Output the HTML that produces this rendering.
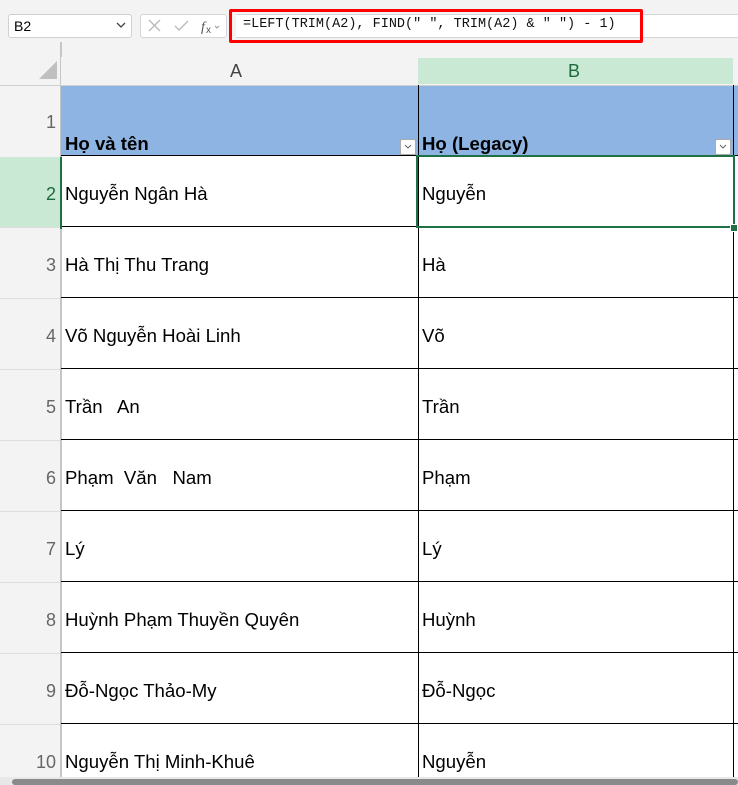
<!DOCTYPE html>
<html><head><meta charset="utf-8"><style>
body{margin:0;width:738px;height:785px;overflow:hidden;background:#fff;font-family:"Liberation Sans",sans-serif;position:relative}
.a{position:absolute}
.cell{position:absolute;font-size:18.6px;color:#000;white-space:pre;line-height:20px}
.rn{position:absolute;left:0;width:56px;text-align:right;font-size:18px;color:#666;line-height:20px}
.hl{position:absolute;height:1px;background:#000;left:61px;width:677px}
.dd{position:absolute;top:139px;width:14px;height:14px;background:#fff;border:1px solid #aaa;border-radius:2px}
</style></head><body>
<div class="a" style="left:0;top:0;width:738px;height:57px;background:#f3f3f3"></div>
<div class="a" style="left:8px;top:14px;width:122px;height:22px;border:1px solid #d0d0d0;background:#fff;border-radius:3px;font-size:14px;line-height:22px;text-indent:5px">B2</div>
<svg class="a" style="left:115px;top:20px" width="12" height="10"><path d="M2 3l4 4 4-4" stroke="#444" fill="none" stroke-width="1.3"/></svg>
<div class="a" style="left:140px;top:14px;width:85px;height:22px;border:1px solid #d6d6d6;background:#fff;border-radius:3px"></div>
<svg class="a" style="left:146px;top:18px" width="80" height="16"><path d="M3 2l11 11M14 2L3 13" stroke="#bbb" stroke-width="1.4"/><path d="M29 8l4 4 9-9" stroke="#bbb" stroke-width="1.4" fill="none"/><text x="55" y="13" font-size="14" font-style="italic" font-family="Liberation Serif" fill="#555">f</text><text x="60" y="15" font-size="10" font-family="Liberation Sans" fill="#555">x</text><path d="M69 8l2 2 2-2" stroke="#999" fill="none"/></svg>
<div class="a" style="left:236px;top:14px;width:502px;height:22px;background:#fff;border-top:1px solid #d6d6d6;border-bottom:1px solid #d6d6d6"></div>
<div class="a" style="left:243px;top:16px;font-family:'Liberation Mono',monospace;font-size:13.5px;line-height:18px;color:#111;white-space:pre">=LEFT(TRIM(A2), FIND(" ", TRIM(A2) &amp; " ") - 1)</div>
<div class="a" style="left:229px;top:9px;width:408px;height:28px;border:3px solid #f00;border-radius:2px"></div>
<div class="a" style="left:0;top:57px;width:61px;height:728px;background:#f3f3f3"></div>
<div class="a" style="left:60px;top:42px;width:2px;height:735px;background:#c6c6c6"></div>
<svg class="a" style="left:38px;top:60px" width="20" height="20"><path d="M19 1V19H1Z" fill="#c0c0c0"/></svg>
<div class="a" style="left:61px;top:57px;width:677px;height:28px;background:#f3f3f3"></div>
<div class="a" style="left:418px;top:58px;width:315px;height:26px;background:#c9e9d5"></div>
<div class="a" style="left:0;top:85px;width:738px;height:1px;background:#d0d0d0"></div>
<div class="a" style="left:230px;top:61px;font-size:18px;color:#444">A</div>
<div class="a" style="left:568px;top:61px;font-size:18px;color:#1d6b3c">B</div>
<div class="a" style="left:0;top:157px;width:60px;height:70px;background:#c9e9d5"></div>
<div class="a" style="left:61px;top:86px;width:677px;height:70px;background:#8eb4e3"></div>
<div class="a" style="left:418px;top:85px;width:1px;height:700px;background:#000"></div>
<div class="a" style="left:733px;top:85px;width:1px;height:700px;background:#000"></div>
<div class="hl" style="top:155px"></div>
<div class="hl" style="top:226px"></div><div class="hl" style="top:297px"></div><div class="hl" style="top:368px"></div><div class="hl" style="top:439px"></div><div class="hl" style="top:510px"></div><div class="hl" style="top:581px"></div><div class="hl" style="top:652px"></div><div class="hl" style="top:723px"></div>
<div class="a" style="left:0;top:227px;width:60px;height:1px;background:#ddd"></div>
<div class="a" style="left:0;top:298px;width:60px;height:1px;background:#ddd"></div>
<div class="a" style="left:0;top:369px;width:60px;height:1px;background:#ddd"></div>
<div class="a" style="left:0;top:440px;width:60px;height:1px;background:#ddd"></div>
<div class="a" style="left:0;top:511px;width:60px;height:1px;background:#ddd"></div>
<div class="a" style="left:0;top:582px;width:60px;height:1px;background:#ddd"></div>
<div class="a" style="left:0;top:653px;width:60px;height:1px;background:#ddd"></div>
<div class="a" style="left:0;top:724px;width:60px;height:1px;background:#ddd"></div>
<div class="cell" style="left:65px;top:134px;font-weight:bold">Họ và tên</div>
<div class="cell" style="left:422px;top:134px;font-weight:bold">Họ (Legacy)</div>
<div class="dd" style="left:400px"></div>
<div class="dd" style="left:715px"></div>
<svg class="a" style="left:404px;top:144px" width="8" height="6"><path d="M1 1l3 3 3-3" stroke="#666" fill="none"/></svg>
<svg class="a" style="left:719px;top:144px" width="8" height="6"><path d="M1 1l3 3 3-3" stroke="#666" fill="none"/></svg>
<div class="rn" style="top:112px">1</div>
<div class="rn" style="top:184px;color:#1d6b3c">2</div><div class="cell" style="left:65px;top:184px">Nguyễn Ngân Hà</div><div class="cell" style="left:422px;top:184px">Nguyễn</div>
<div class="rn" style="top:255px">3</div><div class="cell" style="left:65px;top:255px">Hà Thị Thu Trang</div><div class="cell" style="left:422px;top:255px">Hà</div>
<div class="rn" style="top:326px">4</div><div class="cell" style="left:65px;top:326px">Võ Nguyễn Hoài Linh</div><div class="cell" style="left:422px;top:326px">Võ</div>
<div class="rn" style="top:397px">5</div><div class="cell" style="left:65px;top:397px">Trần   An</div><div class="cell" style="left:422px;top:397px">Trần</div>
<div class="rn" style="top:468px">6</div><div class="cell" style="left:65px;top:468px">Phạm  Văn   Nam</div><div class="cell" style="left:422px;top:468px">Phạm</div>
<div class="rn" style="top:539px">7</div><div class="cell" style="left:65px;top:539px">Lý</div><div class="cell" style="left:422px;top:539px">Lý</div>
<div class="rn" style="top:610px">8</div><div class="cell" style="left:65px;top:610px">Huỳnh Phạm Thuyền Quyên</div><div class="cell" style="left:422px;top:610px">Huỳnh</div>
<div class="rn" style="top:681px">9</div><div class="cell" style="left:65px;top:681px">Đỗ-Ngọc Thảo-My</div><div class="cell" style="left:422px;top:681px">Đỗ-Ngọc</div>
<div class="rn" style="top:752px">10</div><div class="cell" style="left:65px;top:752px">Nguyễn Thị Minh-Khuê</div><div class="cell" style="left:422px;top:752px">Nguyễn</div>
<div class="a" style="left:416px;top:155px;width:315px;height:69px;border:2px solid #1e7145"></div>
<div class="a" style="left:730px;top:224px;width:6px;height:6px;background:#1e7145;border:1px solid #fff"></div>
<div class="a" style="left:60px;top:157px;width:2px;height:72px;background:#1e7145"></div>
<div class="a" style="left:0;top:777px;width:738px;height:8px;background:#e8e8e8"></div>
<div class="a" style="left:12px;top:779px;width:726px;height:6px;background:#8a8a8a;border-radius:3px"></div>
</body></html>
